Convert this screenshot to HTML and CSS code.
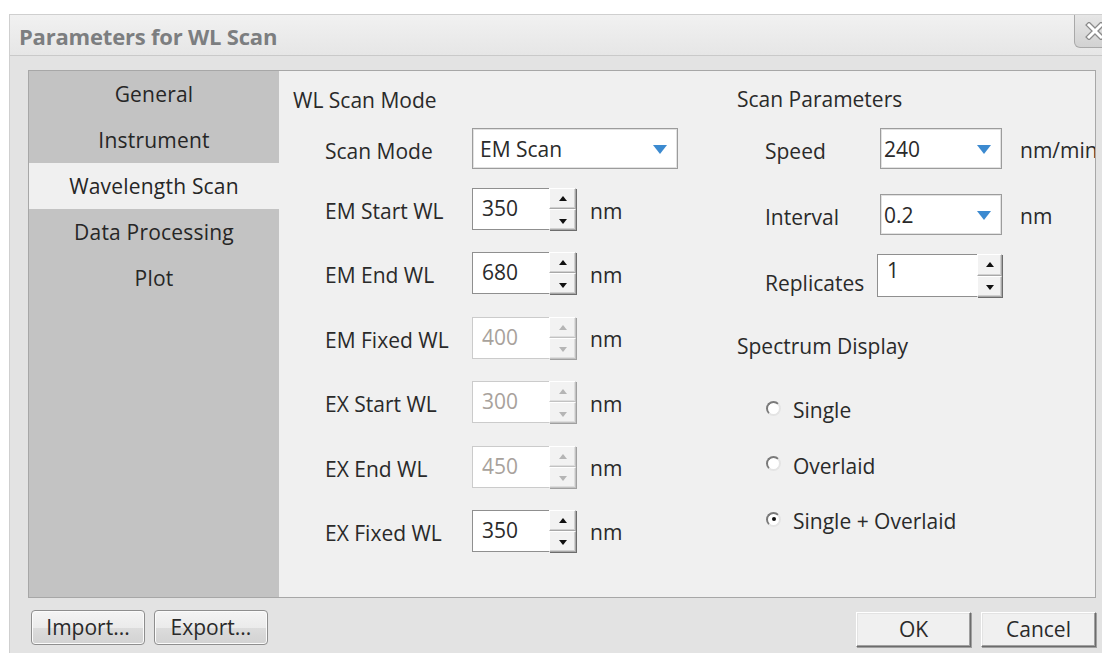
FILE: index.html
```html
<!DOCTYPE html>
<html lang="en">
<head>
<meta charset="utf-8">
<title>Parameters for WL Scan</title>
<link rel="stylesheet" href="styles.css">
</head>
<body>
<div class="dialog">
  <div class="titlebar">
    <span class="title">Parameters for WL Scan</span>
    <button class="close" type="button" aria-label="Close">
      <svg width="20" height="18" viewBox="0 0 20 18">
        <path d="M4 3 L16 15 M16 3 L4 15" stroke="#8a8a8a" stroke-width="5.5" stroke-linecap="square" fill="none"/>
        <path d="M4 3 L16 15 M16 3 L4 15" stroke="#ffffff" stroke-width="3" stroke-linecap="square" fill="none"/>
      </svg>
    </button>
  </div>

  <div class="dialog-body">
    <div class="panel">
      <nav class="nav">
        <div class="nav-item">General</div>
        <div class="nav-item">Instrument</div>
        <div class="nav-item active">Wavelength Scan</div>
        <div class="nav-item">Data Processing</div>
        <div class="nav-item">Plot</div>
      </nav>

      <div class="content">
        <section class="col col-left">
          <h2 class="group-title">WL Scan Mode</h2>
          <div class="rows">
            <div class="row row-combo">
              <span class="label">Scan Mode</span>
              <div class="combo combo-wide"><span class="value">EM Scan</span><span class="arrow"></span></div>
            </div>
            <div class="row">
              <span class="label">EM Start WL</span>
              <div class="spin"><span class="value">350</span><span class="spin-btns"><span class="up"></span><span class="down"></span></span></div>
              <span class="unit">nm</span>
            </div>
            <div class="row">
              <span class="label">EM End WL</span>
              <div class="spin"><span class="value">680</span><span class="spin-btns"><span class="up"></span><span class="down"></span></span></div>
              <span class="unit">nm</span>
            </div>
            <div class="row">
              <span class="label">EM Fixed WL</span>
              <div class="spin disabled"><span class="value">400</span><span class="spin-btns"><span class="up"></span><span class="down"></span></span></div>
              <span class="unit">nm</span>
            </div>
            <div class="row">
              <span class="label">EX Start WL</span>
              <div class="spin disabled"><span class="value">300</span><span class="spin-btns"><span class="up"></span><span class="down"></span></span></div>
              <span class="unit">nm</span>
            </div>
            <div class="row">
              <span class="label">EX End WL</span>
              <div class="spin disabled"><span class="value">450</span><span class="spin-btns"><span class="up"></span><span class="down"></span></span></div>
              <span class="unit">nm</span>
            </div>
            <div class="row">
              <span class="label">EX Fixed WL</span>
              <div class="spin"><span class="value">350</span><span class="spin-btns"><span class="up"></span><span class="down"></span></span></div>
              <span class="unit">nm</span>
            </div>
          </div>
        </section>

        <section class="col col-right">
          <h2 class="group-title">Scan Parameters</h2>
          <div class="params">
            <div class="prow prow-speed">
              <span class="plabel">Speed</span>
              <div class="combo combo-narrow"><span class="value">240</span><span class="arrow"></span></div>
              <span class="punit">nm/min</span>
            </div>
            <div class="prow prow-interval">
              <span class="plabel">Interval</span>
              <div class="combo combo-narrow"><span class="value">0.2</span><span class="arrow"></span></div>
              <span class="punit">nm</span>
            </div>
            <div class="prow prow-replicates">
              <span class="plabel plabel-low">Replicates</span>
              <div class="spin spin-wide"><span class="value value-top">1</span><span class="spin-btns"><span class="up"></span><span class="down"></span></span></div>
            </div>
          </div>

          <h2 class="group-title display-title">Spectrum Display</h2>
          <div class="radios">
            <div class="radio"><span class="radio-mark"></span><span>Single</span></div>
            <div class="radio"><span class="radio-mark"></span><span>Overlaid</span></div>
            <div class="radio"><span class="radio-mark checked"></span><span>Single + Overlaid</span></div>
          </div>
        </section>
      </div>
    </div>

    <div class="footer">
      <div class="btn-group">
        <button class="btn btn-round" type="button">Import...</button>
        <button class="btn btn-round" type="button">Export...</button>
      </div>
      <div class="btn-group btn-group-right">
        <button class="btn btn-square" type="button">OK</button>
        <button class="btn btn-square" type="button">Cancel</button>
      </div>
    </div>
  </div>
</div>
</body>
</html>
```

FILE: styles.css
```css
* { box-sizing: border-box; }

html, body {
  margin: 0;
  padding: 0;
  background: #ffffff;
  overflow: hidden;
  width: 1102px;
  height: 653px;
}

body {
  font-family: "Open Sans", "Noto Sans", sans-serif;
  font-size: 21px;
  color: #2a2a2a;
}

/* ---------- window frame ---------- */
.dialog {
  margin: 14px 0 0 9px;
  width: 1110px;
  height: 660px;
  border: 1px solid #cfcfcf;
  border-right: none;
  background: #e3e3e3;
}

.titlebar {
  height: 41px;
  display: flex;
  align-items: flex-start;
  justify-content: space-between;
  background: linear-gradient(#f1f1f1, #e6e6e6);
  border-bottom: 1px solid #c9c9c9;
}

.title {
  font-weight: 700;
  font-size: 22px;
  color: #7c7e80;
  line-height: 42px;
  padding-left: 9px;
  letter-spacing: -0.2px;
}

.close {
  width: 45px;
  height: 33px;
  margin-left: auto;
  border: 1px solid #a9a9a9;
  border-top: none;
  border-bottom-left-radius: 6px;
  background: linear-gradient(#e6e6e6, #d2d2d2);
  display: flex;
  align-items: center;
  justify-content: flex-start;
  padding: 0 0 0 10px;
}

.close svg { display: block; }

.dialog-body {
  padding: 14px 0 0 18px;
}

/* ---------- main panel ---------- */
.panel {
  width: 1068px;
  height: 528px;
  border: 1px solid #a7a7a7;
  display: flex;
  background: #f0f0f0;
}

.nav {
  width: 250px;
  flex: none;
  background: #c3c3c3;
}

.nav-item {
  height: 46px;
  line-height: 46px;
  text-align: center;
  color: #262626;
  letter-spacing: 0.2px;
}

.nav-item.active {
  background: #f0f0f0;
}

.content {
  flex: 1;
  display: flex;
  overflow: hidden;
  background: #f0f0f0;
}

.col { flex: none; }

.col-left {
  width: 458px;
  padding-left: 14px;
}

.col-right {
  flex: 1;
}

.group-title {
  margin: 0;
  font-size: 21px;
  font-weight: 400;
  line-height: 28px;
  color: #2a2a2a;
  padding-top: 15px;
}

.col-right .group-title { padding-top: 14px; }

/* ---------- left column form ---------- */
.rows {
  display: flex;
  flex-direction: column;
  padding-left: 32px;
  padding-top: 14px;
}

.row {
  display: flex;
  align-items: center;
  height: 42px;
  margin-top: 22.4px;
}

.row-combo {
  height: 41px;
  margin-top: 0;
  margin-bottom: -3.4px;
}

.label {
  width: 147px;
  flex: none;
  white-space: nowrap;
  padding-top: 4px;
}

.unit { margin-left: 14px; padding-top: 3px; }

/* combo box */
.combo {
  height: 41px;
  border: 1px solid #9c9c9c;
  box-shadow: inset 0 0 0 1px #e2e2e2;
  background: #ffffff;
  display: flex;
  align-items: center;
  justify-content: space-between;
  padding: 0 10px 0 7px;
  white-space: nowrap;
}

.combo-wide { width: 206px; }
.combo-narrow { width: 122px; padding-left: 3px; }

.arrow {
  width: 0;
  height: 0;
  border-left: 7px solid transparent;
  border-right: 7px solid transparent;
  border-top: 9px solid #3c8ad0;
  margin-top: 2px;
}

/* spinner */
.spin {
  height: 42px;
  width: 104px;
  display: flex;
  border: 1px solid #8f8f8f;
  border-right: none;
  background: #ffffff;
}

.spin .value {
  flex: 1;
  padding-left: 9px;
  line-height: 38px;
  color: #2a2a2a;
}

.spin-btns {
  width: 27px;
  flex: none;
  display: flex;
  flex-direction: column;
  background: #f0f0f0;
  margin-top: -1px;
  margin-bottom: -1px;
}

.spin-btns span {
  flex: 1;
  border: 1px solid #a8a8a8;
  border-top-color: #ffffff;
  border-left-color: #ffffff;
  box-shadow: inset -1px -1px 0 #d0d0d0, 1px 1px 0 #6d6d6d;
  background: #f2f2f2;
  display: flex;
  align-items: center;
  justify-content: center;
}

.spin-btns .up::after,
.spin-btns .down::after {
  content: "";
  width: 0;
  height: 0;
  border-left: 4px solid transparent;
  border-right: 4px solid transparent;
}

.spin-btns .up::after { border-bottom: 5px solid #111111; }
.spin-btns .down::after { border-top: 5px solid #111111; margin-top: 3px; }

.spin.disabled {
  border-color: #cbcbcb;
}

.spin.disabled .value { color: #a8a29c; }

.spin.disabled .spin-btns span {
  border-color: #ffffff #c2c2c2 #c2c2c2 #ffffff;
  box-shadow: inset -1px -1px 0 #dedede, 1px 1px 0 #a0a0a0;
}

.spin.disabled .up::after { border-bottom-color: #b5b5b5; }
.spin.disabled .down::after { border-top-color: #b5b5b5; }

.spin-wide { width: 125px; height: 43px; }
.spin-wide .spin-btns { width: 25px; }
.spin-wide .value-top { line-height: 30px; padding-left: 9px; }

/* ---------- right column ---------- */
.params {
  padding-left: 28px;
  padding-top: 15px;
  display: flex;
  flex-direction: column;
}

.prow {
  display: flex;
  align-items: center;
}

.plabel {
  width: 115px;
  flex: none;
  white-space: nowrap;
  padding-top: 4px;
}

.punit {
  margin-left: 18px;
  white-space: nowrap;
  padding-top: 3px;
}

.prow-interval { margin-top: 25px; }

.prow-replicates {
  margin-top: 19px;
  align-items: flex-end;
}

.plabel-low {
  width: 112px;
  padding-top: 0;
  margin-bottom: 0;
}

.col-right .display-title { padding-top: 35px; }

.radios {
  padding-left: 29px;
  padding-top: 36px;
  display: flex;
  flex-direction: column;
  gap: 27.5px;
}

.radio {
  display: flex;
  align-items: center;
  height: 28px;
}

.radio-mark {
  width: 15px;
  height: 15px;
  border-radius: 50%;
  margin-right: 12px;
  background: #ffffff;
  border: 2px solid;
  border-color: #7a7a7a #e4e4e4 #e4e4e4 #7a7a7a;
  position: relative;
  margin-top: -4px;
}

.radio-mark.checked::after {
  content: "";
  position: absolute;
  left: 3.5px;
  top: 3.5px;
  width: 4px;
  height: 4px;
  border-radius: 50%;
  background: #111111;
}

/* ---------- footer buttons ---------- */
.footer {
  display: flex;
  justify-content: space-between;
  width: 1068px;
  padding-top: 12px;
}

.btn-group {
  display: flex;
  gap: 9px;
}

.btn-group-right {
  gap: 10px;
  padding-top: 2px;
}

.btn {
  font-family: "Open Sans", "Noto Sans", sans-serif;
  font-size: 21px;
  color: #2a2a2a;
  height: 35px;
  width: 114px;
  padding: 0;
  line-height: 31px;
}

.btn-round {
  border: 1px solid #8e8e8e;
  border-radius: 4px;
  background: linear-gradient(#f4f4f4 0%, #ebebeb 50%, #dcdcdc 51%, #d2d2d2 100%);
  box-shadow: inset 0 0 0 1px #fbfbfb;
}

.btn-round:first-child { margin-left: 3px; }

.btn-square {
  border: 1px solid;
  border-color: #ffffff #6c6c6c #6c6c6c #ffffff;
  box-shadow: 1px 1px 0 #a0a0a0, inset -1px -1px 0 #a0a0a0, inset 1px 1px 0 #e3e3e3;
  background: #f0f0f0;
  width: 115px;
}
```
